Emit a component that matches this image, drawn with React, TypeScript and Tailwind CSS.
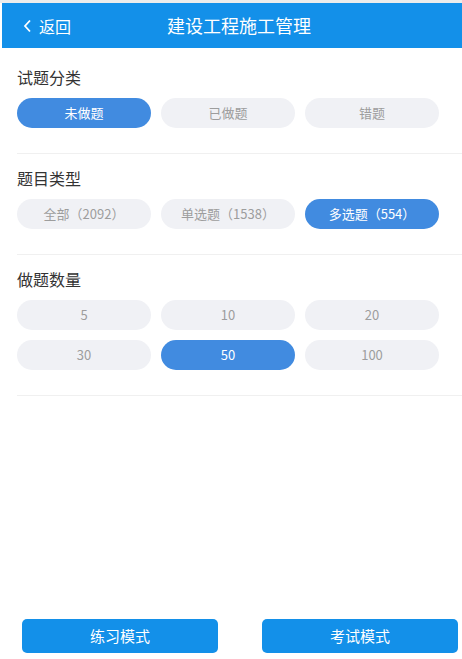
import React from 'react';

const FONT = { fontFamily: '"Noto Sans CJK SC", "Noto Sans", sans-serif' };

type Option = { label: string; value: string };

const categories: Option[] = [
  { label: '未做题', value: 'todo' },
  { label: '已做题', value: 'done' },
  { label: '错题', value: 'wrong' }
];

const types: Option[] = [
  { label: '全部（2092）', value: 'all' },
  { label: '单选题（1538）', value: 'single' },
  { label: '多选题（554）', value: 'multi' }
];

const counts: Option[] = ['5', '10', '20', '30', '50', '100'].map((n) => ({ label: n, value: n }));

const Pills = ({
  options,
  selected,
  onSelect
}: {
  options: Option[];
  selected: string;
  onSelect: (v: string) => void;
}) => (
  <div className="grid grid-cols-[134px_134px_134px] gap-[10px]">
    {options.map((o) => {
      const active = o.value === selected;
      return (
        <button
          key={o.value}
          onClick={() => onSelect(o.value)}
          className={`h-[30px] rounded-full text-[13px] leading-[30px] ${
            active ? 'bg-[#418be0] text-white' : 'bg-[#f0f1f5] text-[#9d9d9d]'
          }`}
        >
          {o.label}
        </button>
      );
    })}
  </div>
);

const Section = ({
  title,
  first = false,
  children
}: {
  title: string;
  first?: boolean;
  children: React.ReactNode;
}) => (
  <div className={`ml-[17px] border-b border-[#f0f0f0] pb-[25px] ${first ? 'pt-[19px]' : 'pt-[14px]'}`}>
    <div className="mb-[11px] h-5 text-[16px] leading-5 text-[#333]">{title}</div>
    {children}
  </div>
);

export default function App() {
  const [category, setCategory] = React.useState('todo');
  const [type, setType] = React.useState('multi');
  const [count, setCount] = React.useState('50');

  return (
    <div className="flex min-h-[659px] flex-col bg-white" style={FONT}>
      <div className="h-[3px] bg-[#ececec]" />

      {/* Header */}
      <div className="ml-[2px] flex h-[45px] items-center bg-[#1390e9] text-white">
        <button className="ml-[21px] flex items-center text-[16px]">
          <svg width="10" height="14" viewBox="0 0 10 14" className="mr-[6px]">
            <polyline points="7,1.5 2,7 7,12.5" fill="none" stroke="white" strokeWidth="1.8" />
          </svg>
          返回
        </button>
        <div className="ml-[96px] text-[18px]">建设工程施工管理</div>
      </div>

      <Section title="试题分类" first>
        <Pills options={categories} selected={category} onSelect={setCategory} />
      </Section>

      <Section title="题目类型">
        <Pills options={types} selected={type} onSelect={setType} />
      </Section>

      <Section title="做题数量">
        <Pills options={counts} selected={count} onSelect={setCount} />
      </Section>

      <div className="flex-1" />

      {/* Bottom actions */}
      <div className="flex justify-between pb-[6px] pl-[22px] pr-[4px]">
        <button className="h-[34px] w-[196px] rounded-[5px] bg-[#1390e9] text-[15px] text-white">练习模式</button>
        <button className="h-[34px] w-[196px] rounded-[5px] bg-[#1390e9] text-[15px] text-white">考试模式</button>
      </div>
    </div>
  );
}
